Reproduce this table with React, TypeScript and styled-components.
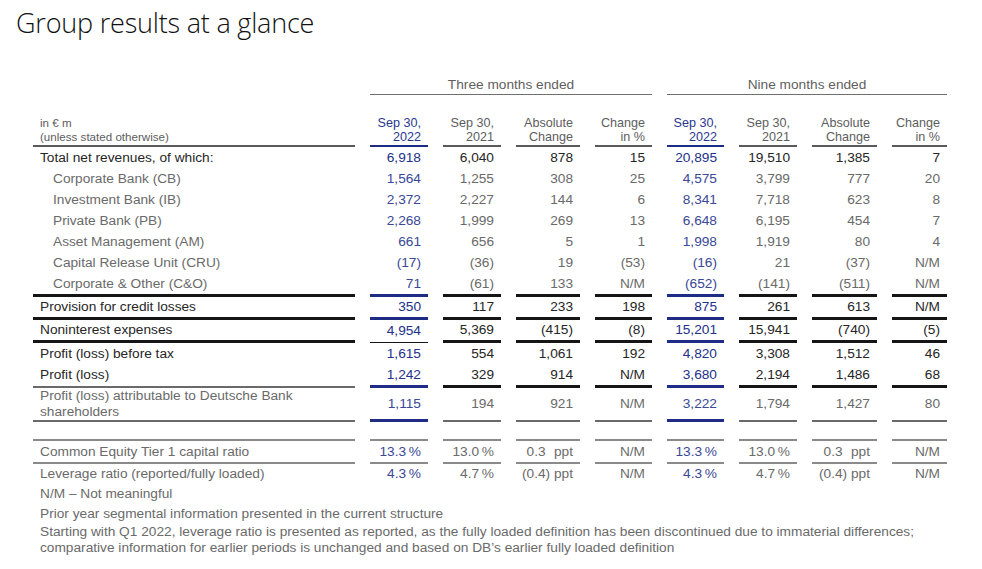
import React from "react";
import styled, { createGlobalStyle } from "styled-components";

const GlobalStyle = createGlobalStyle`
  html, body { margin: 0; padding: 0; background: #ffffff; }
  body { font-family: "Liberation Sans", Arial, sans-serif; }
`;

type Rule = "none" | "thick" | "blueThick" | "thin" | "gray" | "grayLight" | "head" | "blueHead" | "group";
type Tone = "dark" | "muted" | "blue" | "blueMuted" | "head" | "blueHead";

const ruleCss: Record<Rule, string> = {
  none: "none",
  thick: "3px solid #151515",
  blueThick: "3px solid #1f2c85",
  thin: "1px solid #151515",
  gray: "2px solid #6a6a6a",
  grayLight: "2px solid #8a8a8a",
  head: "2px solid #5a5a5a",
  blueHead: "2px solid #1f2c85",
  group: "1px solid #6f6f6f",
};

const toneColor: Record<Tone, string> = {
  dark: "#262626",
  muted: "#6a6a6a",
  blue: "#23318a",
  blueMuted: "#3a4896",
  head: "#5d5d5d",
  blueHead: "#2a3790",
};

const Page = styled.div`
  width: 982px;
  height: 569px;
  box-sizing: border-box;
  padding: 6px 0 0 0;
  overflow: hidden;
`;

const Title = styled.h1`
  margin: 0 0 0 16px;
  font-family: "Open Sans", "Noto Sans", sans-serif;
  font-weight: 300;
  font-size: 27px;
  line-height: 34px;
  color: #111;
  letter-spacing: -0.2px;
`;

const Table = styled.div`
  margin: 37px 0 0 33px;
  width: 914px;
`;

const Row = styled.div<{ $h?: number; $mt?: number }>`
  display: grid;
  grid-template-columns: 322px 58px 58px 64px 57px 57px 58px 65px 55px;
  column-gap: 15px;
  height: ${(p) => (p.$h ? `${p.$h}px` : "auto")};
  margin-top: ${(p) => p.$mt ?? 0}px;
`;

const GroupCell = styled.div<{ $span: string }>`
  grid-column: ${(p) => p.$span};
  border-bottom: ${ruleCss.group};
  text-align: center;
  font-size: 13.7px;
  line-height: 16px;
  color: #5f5f5f;
  padding-bottom: 1px;
`;

const HeadCell = styled.div<{ $tone: Tone; $rule: Rule; $left?: boolean }>`
  display: flex;
  flex-direction: column;
  justify-content: flex-end;
  align-items: ${(p) => (p.$left ? "flex-start" : "flex-end")};
  padding: 0 ${(p) => (p.$left ? "0" : "7px")} 1px ${(p) => (p.$left ? "7px" : "0")};
  font-size: ${(p) => (p.$left ? "11.6px" : "12.6px")};
  line-height: 14px;
  color: ${(p) => toneColor[p.$tone]};
  border-bottom: ${(p) => ruleCss[p.$rule]};
  text-align: right;
  white-space: nowrap;
`;

const Cell = styled.div<{ $tone: Tone; $rule: Rule; $indent?: number; $num?: boolean; $lh?: number }>`
  display: flex;
  align-items: center;
  justify-content: ${(p) => (p.$num ? "flex-end" : "flex-start")};
  padding: 0 ${(p) => (p.$num ? "7px" : "0")} 0 ${(p) => (p.$num ? "0" : `${p.$indent ?? 7}px`)};
  font-size: 13.7px;
  line-height: ${(p) => p.$lh ?? 16}px;
  color: ${(p) => toneColor[p.$tone]};
  border-bottom: ${(p) => ruleCss[p.$rule]};
  white-space: ${(p) => (p.$num ? "nowrap" : "normal")};
`;

const RatioRow = styled(Row)`
  & > div {
    border-top: ${ruleCss.grayLight};
  }
`;

const Ghost = styled.span`
  visibility: hidden;
`;

const Notes = styled.div`
  padding-left: 7px;
  font-size: 13.7px;
  color: #6a6a6a;
`;

const NoteLine = styled.div`
  line-height: 20px;
`;

const NotePara = styled.div`
  line-height: 16px;
`;

type DataRow = {
  label: React.ReactNode;
  values: React.ReactNode[];
  labelTone: Tone;
  valueTone: Tone;
  blueTone: Tone;
  indent?: number;
  height: number;
  lh?: number;
  labelRule?: Rule;
  rules?: Rule[];
};

const ALL = (r: Rule): Rule[] => [r, r, r, r, r, r, r, r];
const SECTION: Rule[] = ["blueThick", "thick", "thick", "thick", "blueThick", "thick", "thick", "thick"];

const rows: DataRow[] = [
  { label: "Total net revenues, of which:", values: ["6,918", "6,040", "878", "15", "20,895", "19,510", "1,385", "7"], labelTone: "dark", valueTone: "dark", blueTone: "blue", height: 21 },
  { label: "Corporate Bank (CB)", values: ["1,564", "1,255", "308", "25", "4,575", "3,799", "777", "20"], labelTone: "muted", valueTone: "muted", blueTone: "blueMuted", indent: 20, height: 21 },
  { label: "Investment Bank (IB)", values: ["2,372", "2,227", "144", "6", "8,341", "7,718", "623", "8"], labelTone: "muted", valueTone: "muted", blueTone: "blueMuted", indent: 20, height: 21 },
  { label: "Private Bank (PB)", values: ["2,268", "1,999", "269", "13", "6,648", "6,195", "454", "7"], labelTone: "muted", valueTone: "muted", blueTone: "blueMuted", indent: 20, height: 21 },
  { label: "Asset Management (AM)", values: ["661", "656", "5", "1", "1,998", "1,919", "80", "4"], labelTone: "muted", valueTone: "muted", blueTone: "blueMuted", indent: 20, height: 21 },
  { label: "Capital Release Unit (CRU)", values: ["(17)", "(36)", "19", "(53)", "(16)", "21", "(37)", "N/M"], labelTone: "muted", valueTone: "muted", blueTone: "blueMuted", indent: 20, height: 21 },
  { label: "Corporate & Other (C&O)", values: ["71", "(61)", "133", "N/M", "(652)", "(141)", "(511)", "N/M"], labelTone: "muted", valueTone: "muted", blueTone: "blueMuted", indent: 20, height: 24, labelRule: "thick", rules: SECTION },
  { label: "Provision for credit losses", values: ["350", "117", "233", "198", "875", "261", "613", "N/M"], labelTone: "dark", valueTone: "dark", blueTone: "blue", height: 23, labelRule: "thick", rules: SECTION },
  { label: "Noninterest expenses", values: ["4,954", "5,369", "(415)", "(8)", "15,201", "15,941", "(740)", "(5)"], labelTone: "dark", valueTone: "dark", blueTone: "blue", height: 23, labelRule: "thick", rules: ["thin", "thick", "thick", "thick", "blueThick", "thick", "thick", "thick"] },
  { label: "Profit (loss) before tax", values: ["1,615", "554", "1,061", "192", "4,820", "3,308", "1,512", "46"], labelTone: "dark", valueTone: "dark", blueTone: "blue", height: 21 },
  { label: "Profit (loss)", values: ["1,242", "329", "914", "N/M", "3,680", "2,194", "1,486", "68"], labelTone: "dark", valueTone: "dark", blueTone: "blue", height: 24, labelRule: "gray", rules: SECTION },
  { label: <>Profit (loss) attributable to Deutsche Bank<br />shareholders</>, values: ["1,115", "194", "921", "N/M", "3,222", "1,794", "1,427", "80"], labelTone: "muted", valueTone: "muted", blueTone: "blueMuted", height: 34, lh: 16, labelRule: "gray", rules: ["blueThick", "gray", "gray", "gray", "blueThick", "gray", "gray", "gray"] },
];

const ppt = (n: string, ghost?: boolean) => (
  <>
    {n}
    {ghost ? <Ghost>)</Ghost> : null}&nbsp;ppt
  </>
);

const cet1 = ["13.3\u2009%", "13.0\u2009%", ppt("0.3", true), "N/M", "13.3\u2009%", "13.0\u2009%", ppt("0.3", true), "N/M"];
const leverage = ["4.3\u2009%", "4.7\u2009%", ppt("(0.4)"), "N/M", "4.3\u2009%", "4.7\u2009%", ppt("(0.4)"), "N/M"];

const headers: [string, string][] = [
  ["Sep 30,", "2022"],
  ["Sep 30,", "2021"],
  ["Absolute", "Change"],
  ["Change", "in %"],
  ["Sep 30,", "2022"],
  ["Sep 30,", "2021"],
  ["Absolute", "Change"],
  ["Change", "in %"],
];

const isBlue = (i: number) => i === 0 || i === 4;

export default function App() {
  return (
    <>
      <GlobalStyle />
      <Page>
        <Title>Group results at a glance</Title>
        <Table>
          <Row>
            <GroupCell $span="2 / 6">Three months ended</GroupCell>
            <GroupCell $span="6 / 10">Nine months ended</GroupCell>
          </Row>
          <Row $h={52}>
            <HeadCell $tone="head" $rule="head" $left>
              <span>in € m</span>
              <span>(unless stated otherwise)</span>
            </HeadCell>
            {headers.map(([a, b], i) => (
              <HeadCell key={i} $tone={isBlue(i) ? "blueHead" : "head"} $rule={isBlue(i) ? "blueHead" : "head"}>
                <span>{a}</span>
                <span>{b}</span>
              </HeadCell>
            ))}
          </Row>
          {rows.map((r, ri) => (
            <Row key={ri} $h={r.height}>
              <Cell $tone={r.labelTone} $rule={r.labelRule ?? "none"} $indent={r.indent} $lh={r.lh}>
                <span>{r.label}</span>
              </Cell>
              {r.values.map((v, i) => (
                <Cell key={i} $num $tone={isBlue(i) ? r.blueTone : r.valueTone} $rule={(r.rules ?? ALL("none"))[i]}>
                  {v}
                </Cell>
              ))}
            </Row>
          ))}
          <RatioRow $h={25} $mt={17}>
            <Cell $tone="muted" $rule="grayLight">Common Equity Tier 1 capital ratio</Cell>
            {cet1.map((v, i) => (
              <Cell key={i} $num $tone={isBlue(i) ? "blueMuted" : "muted"} $rule="grayLight">
                {v}
              </Cell>
            ))}
          </RatioRow>
          <Row $h={20}>
            <Cell $tone="muted" $rule="none">Leverage ratio (reported/fully loaded)</Cell>
            {leverage.map((v, i) => (
              <Cell key={i} $num $tone={isBlue(i) ? "blueMuted" : "muted"} $rule="none">
                {v}
              </Cell>
            ))}
          </Row>
          <Notes>
            <NoteLine>N/M – Not meaningful</NoteLine>
            <NoteLine>Prior year segmental information presented in the current structure</NoteLine>
            <NotePara>
              Starting with Q1 2022, leverage ratio is presented as reported, as the fully loaded definition has been discontinued due to immaterial differences;
              <br />
              comparative information for earlier periods is unchanged and based on DB’s earlier fully loaded definition
            </NotePara>
          </Notes>
        </Table>
      </Page>
    </>
  );
}
